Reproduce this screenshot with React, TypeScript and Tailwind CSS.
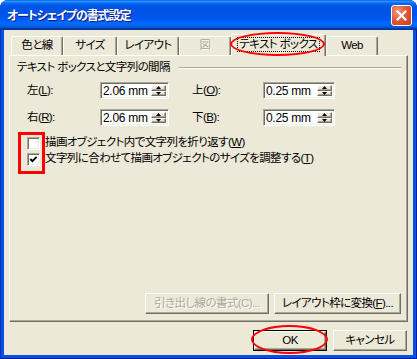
import React from "react";

const FONT =
  "font-['Liberation_Sans','Noto_Sans_CJK_JP',sans-serif] [font-feature-settings:'palt']";

function U({ c }: { c: string }) {
  return <span className="underline underline-offset-[1px]">{c}</span>;
}

function Tab({
  label,
  w,
  selected,
  disabled,
}: {
  label: React.ReactNode;
  w: string;
  selected?: boolean;
  disabled?: boolean;
}) {
  if (selected) {
    return (
      <div
        className={`${w} h-[22px] relative z-10 -mb-px flex items-center justify-center bg-[#ece9d8] border-t border-l border-r border-t-white border-l-white border-r-[#716f64] shadow-[inset_-1px_0_0_#aca899] rounded-t-[2px] pb-[2px]`}
      >
        <span className="outline outline-1 outline-dotted outline-black px-[1px] leading-[13px] whitespace-nowrap">
          {label}
        </span>
      </div>
    );
  }
  return (
    <div
      className={`${w} h-[19px] flex items-center justify-center bg-[#ece9d8] border-t border-l border-r border-t-white border-l-white border-r-[#716f64] shadow-[inset_-1px_0_0_#aca899] rounded-t-[2px] whitespace-nowrap ${
        disabled ? "text-[#aca899] [text-shadow:1px_1px_0_#fff]" : ""
      }`}
    >
      {label}
    </div>
  );
}

function SpinInput({ value, w }: { value: string; w: string }) {
  return (
    <div
      className={`${w} h-[17px] flex items-stretch bg-white border-t border-l border-b border-r border-t-[#aca899] border-l-[#aca899] border-b-white border-r-white shadow-[inset_1px_1px_0_#716f64,inset_-1px_-1px_0_#f1efe2] p-[1px]`}
    >
      <div className="flex-1 flex items-center pl-[1px] text-[12px] tracking-[-0.3px] leading-none whitespace-pre">{value}</div>
      <div className="w-[15px] flex flex-col mr-[1px] my-[1px]">
        <div className="flex-1 flex items-center justify-center bg-[#ece9d8] border-t border-l border-b border-r border-t-white border-l-white border-b-[#716f64] border-r-[#716f64] shadow-[inset_-1px_-1px_0_#aca899]">
          <svg width="5" height="3" viewBox="0 0 5 3">
            <path d="M2.5 0 L5 3 L0 3 Z" fill="#000" />
          </svg>
        </div>
        <div className="flex-1 flex items-center justify-center bg-[#ece9d8] border-t border-l border-b border-r border-t-white border-l-white border-b-[#716f64] border-r-[#716f64] shadow-[inset_-1px_-1px_0_#aca899]">
          <svg width="5" height="3" viewBox="0 0 5 3">
            <path d="M0 0 L5 0 L2.5 3 Z" fill="#000" />
          </svg>
        </div>
      </div>
    </div>
  );
}

function Check({ checked }: { checked?: boolean }) {
  return (
    <div className="w-[13px] h-[13px] shrink-0 bg-white border-t border-l border-b border-r border-t-[#aca899] border-l-[#aca899] border-b-white border-r-white shadow-[inset_1px_1px_0_#716f64,inset_-1px_-1px_0_#f1efe2] flex items-center justify-center">
      {checked && (
        <svg width="9" height="9" viewBox="0 0 9 9">
          <polyline points="1.3,4 3.4,6.2 7.6,1.8" fill="none" stroke="#000" strokeWidth="1.9" />
        </svg>
      )}
    </div>
  );
}

function Btn({
  children,
  w,
  disabled,
  def,
}: {
  children: React.ReactNode;
  w: string;
  disabled?: boolean;
  def?: boolean;
}) {
  const inner = (
    <div
      className={`h-full w-full flex items-center justify-center bg-[#ece9d8] border-t border-l border-b border-r border-t-white border-l-white border-b-[#716f64] border-r-[#716f64] shadow-[inset_-1px_-1px_0_#aca899] whitespace-nowrap ${
        disabled ? "text-[#aca899] [text-shadow:1px_1px_0_#fff]" : "text-black"
      }`}
    >
      {children}
    </div>
  );
  if (def) {
    return <div className={`${w} h-[21px] border border-black`}>{inner}</div>;
  }
  return <div className={`${w} h-[21px]`}>{inner}</div>;
}

export default function App() {
  return (
    <div className={`${FONT} relative w-[417px] h-[359px] overflow-hidden bg-white`}>
      <div className="w-[417px] h-[359px] flex flex-col rounded-t-[8px] bg-[#0a50e0] border-l border-r border-b border-l-[#0031c9] border-r-[#0020a0] border-b-[#0020a0]">
        {/* title bar */}
        <div className="h-[30px] shrink-0 -mx-px flex items-center justify-between pl-[7px] pr-[5px] rounded-t-[8px] bg-[linear-gradient(180deg,#0058ee_0%,#3593ff_4%,#288eff_6%,#127dff_8%,#036ffc_10%,#0262ee_14%,#0057e5_20%,#0054e3_24%,#0055eb_56%,#005bf5_66%,#026afe_76%,#0062ef_86%,#0052d6_92%,#0040ab_94%,#003092_100%)]">
          <div className="text-white font-bold text-[12px] tracking-[-1.1px] leading-none whitespace-nowrap [text-shadow:1px_1px_0_#0a1883] pt-[1px]">
            オートシェイプの書式設定
          </div>
          <div className="w-[21px] h-[21px] mt-[1px] rounded-[3px] border border-white bg-[radial-gradient(circle_at_30%_30%,#f49a7c_0%,#e2583b_45%,#c63d14_100%)] flex items-center justify-center">
            <svg width="11" height="11" viewBox="0 0 11 11">
              <path d="M1.5 1.5 L9.5 9.5 M9.5 1.5 L1.5 9.5" stroke="#fff" strokeWidth="2.2" strokeLinecap="square" />
            </svg>
          </div>
        </div>
        {/* body */}
        <div className="flex-1 mx-[3px] mb-[3px] bg-[#ece9d8] flex flex-col pl-[5px] pr-[5px] text-[11.5px] tracking-[-0.6px] text-black">
          {/* tabs */}
          <div className="mt-[3px] h-[22px] flex items-end pl-[2px]">
            <Tab label="色と線" w="w-[52px]" />
            <Tab label="サイズ" w="w-[54px]" />
            <Tab label="レイアウト" w="w-[62px]" />
            <Tab label="図" w="w-[52px]" disabled />
            <Tab label="テキスト ボックス" w="w-[95px]" selected />
            <Tab label="Web" w="w-[52px]" />
          </div>
          {/* panel */}
          <div className="h-[267px] flex flex-col border border-t-white border-l-white border-r-[#716f64] border-b-[#716f64] shadow-[inset_-1px_-1px_0_#aca899] pl-[7px] pr-[6px] pt-[5px] pb-[7px]">
            <div className="h-[14px] flex items-center gap-[9px]">
              <span className="leading-none whitespace-nowrap">テキスト ボックスと文字列の間隔</span>
              <div className="flex-1 h-[2px] border-t border-b border-t-[#aca899] border-b-white" />
            </div>
            <div className="mt-[7px] h-[17px] flex items-center pl-[10px]">
              <div className="w-[73px]">
                左(<U c="L" />):
              </div>
              <SpinInput value="2.06 mm" w="w-[69px]" />
              <div className="w-[71px] ml-[23px]">
                上(<U c="O" />):
              </div>
              <SpinInput value="0.25 mm" w="w-[72px]" />
            </div>
            <div className="mt-[10px] h-[17px] flex items-center pl-[10px]">
              <div className="w-[73px]">
                右(<U c="R" />):
              </div>
              <SpinInput value="2.06 mm" w="w-[69px]" />
              <div className="w-[71px] ml-[23px]">
                下(<U c="B" />):
              </div>
              <SpinInput value="0.25 mm" w="w-[72px]" />
            </div>
            <div className="mt-[9px] h-[16px] flex items-center pl-[10px] gap-[5px]">
              <Check />
              <span className="whitespace-nowrap">
                描画オブジェクト内で文字列を折り返す(<U c="W" />)
              </span>
            </div>
            <div className="h-[16px] flex items-center pl-[10px] gap-[5px]">
              <Check checked />
              <span className="whitespace-nowrap">
                文字列に合わせて描画オブジェクトのサイズを調整する(<U c="T" />)
              </span>
            </div>
            <div className="flex-1" />
            <div className="h-[21px] flex justify-end gap-[5px]">
              <Btn w="w-[124px]" disabled>
                引き出し線の書式(C)...
              </Btn>
              <Btn w="w-[127px]">
                レイアウト枠に変換(<U c="F" />)...
              </Btn>
            </div>
          </div>
          {/* bottom buttons */}
          <div className="mt-[8px] h-[21px] flex justify-end gap-[6px] pr-[1px]">
            <Btn w="w-[74px]" def>
              OK
            </Btn>
            <Btn w="w-[74px]">キャンセル</Btn>
          </div>
        </div>
      </div>
      {/* red annotations */}
      <div className="absolute z-20 left-[230px] top-[32px] w-[95px] h-[24px] rounded-[50%] border-2 border-[#ff0000] pointer-events-none" />
      <div className="absolute z-20 left-[18px] top-[132px] w-[27px] h-[42px] border-[3px] border-[#ff0000] pointer-events-none" />
      <div className="absolute z-20 left-[251px] top-[325px] w-[77px] h-[29px] rounded-[50%] border-2 border-[#ff0000] pointer-events-none" />
    </div>
  );
}
